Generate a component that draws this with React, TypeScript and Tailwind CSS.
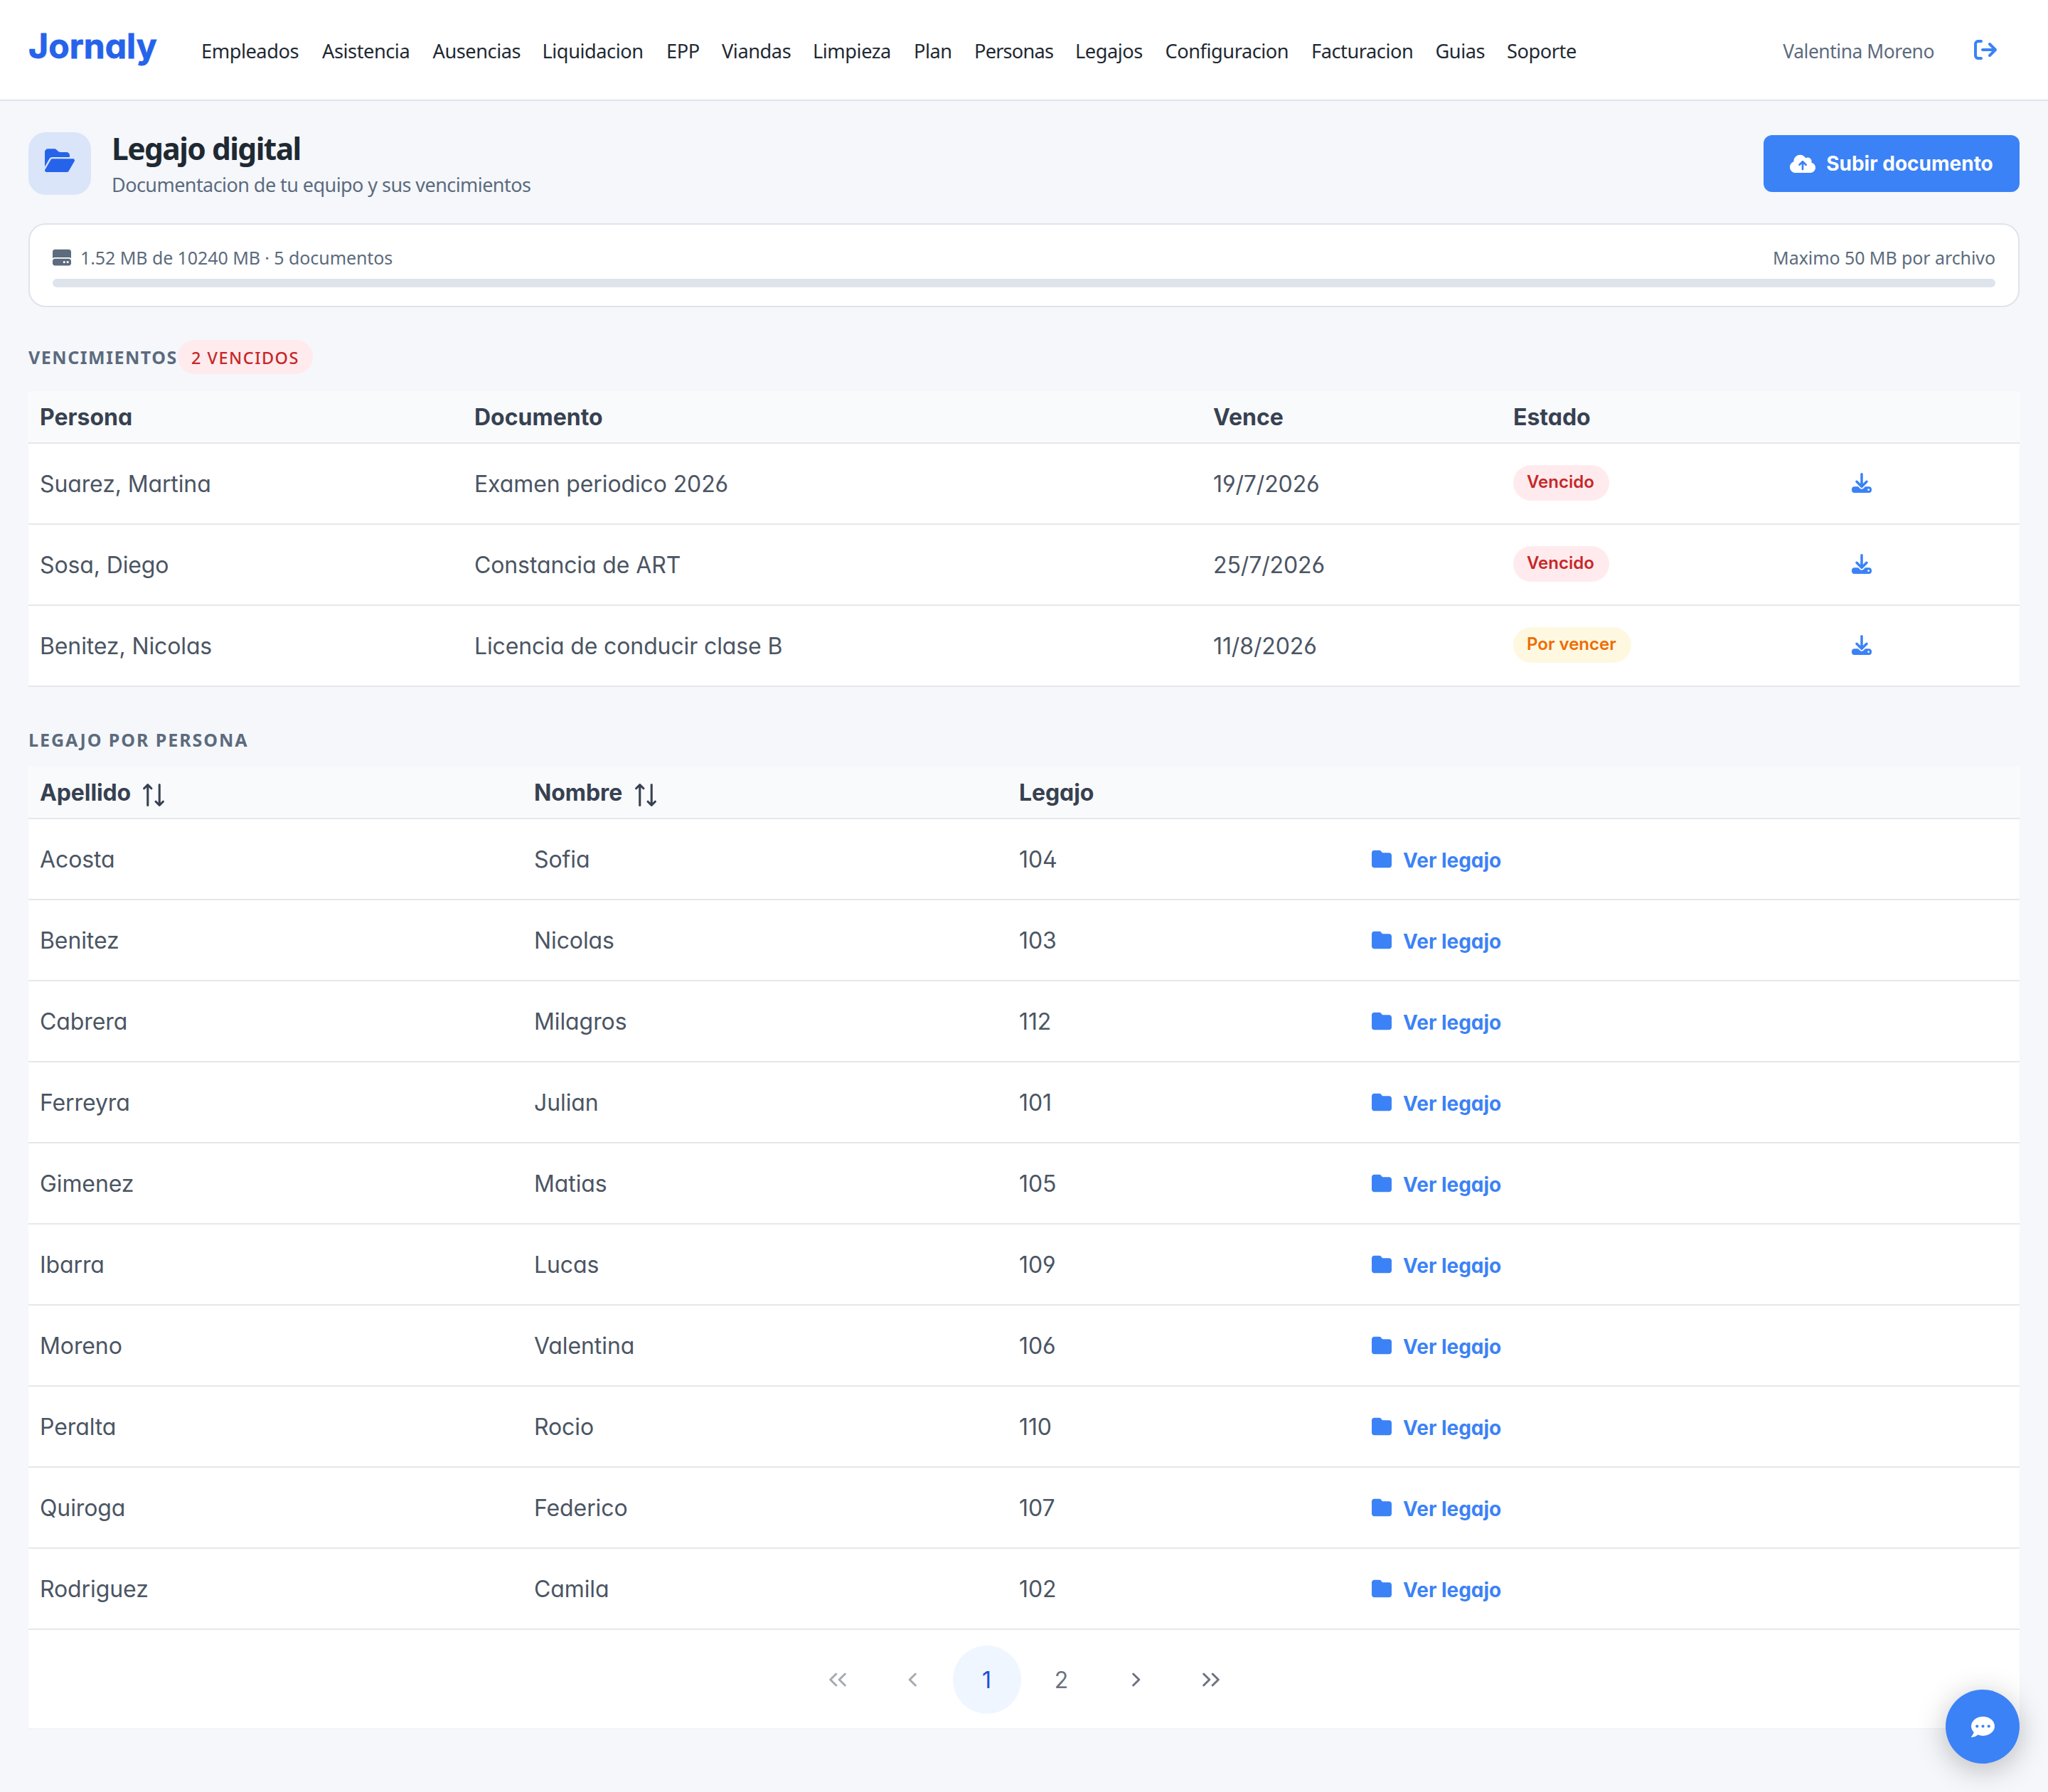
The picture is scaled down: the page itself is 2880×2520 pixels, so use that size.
import type { ReactNode } from "react";
import {
  FaArrowRightFromBracket,
  FaCloudArrowUp,
  FaDownload,
  FaFolder,
  FaFolderOpen,
  FaHardDrive,
} from "react-icons/fa6";
import { FaCommentDots } from "react-icons/fa";

const NAV: [string, string][] = [
  ["Empleados", "w-[138px]"],
  ["Asistencia", "w-[123.5px]"],
  ["Ausencias", "w-[122px]"],
  ["Liquidacion", "w-[142.5px]"],
  ["EPP", "w-[46px]"],
  ["Viandas", "w-[96px]"],
  ["Limpieza", "w-[110px]"],
  ["Plan", "w-[53px]"],
  ["Personas", "w-[110px] tracking-[-0.8px]"],
  ["Legajos", "w-[94.5px]"],
  ["Configuracion", "w-[173.5px]"],
  ["Facturacion", "w-[142.5px]"],
  ["Guias", "w-[68.5px]"],
  ["Soporte", "w-[100px]"],
];

type Status = "Vencido" | "Por vencer";

const DUE: { person: string; doc: string; date: string; status: Status }[] = [
  { person: "Suarez, Martina", doc: "Examen periodico 2026", date: "19/7/2026", status: "Vencido" },
  { person: "Sosa, Diego", doc: "Constancia de ART", date: "25/7/2026", status: "Vencido" },
  { person: "Benitez, Nicolas", doc: "Licencia de conducir clase B", date: "11/8/2026", status: "Por vencer" },
];

const PEOPLE: [string, string, string][] = [
  ["Acosta", "Sofia", "104"],
  ["Benitez", "Nicolas", "103"],
  ["Cabrera", "Milagros", "112"],
  ["Ferreyra", "Julian", "101"],
  ["Gimenez", "Matias", "105"],
  ["Ibarra", "Lucas", "109"],
  ["Moreno", "Valentina", "106"],
  ["Peralta", "Rocio", "110"],
  ["Quiroga", "Federico", "107"],
  ["Rodriguez", "Camila", "102"],
];

const DUE_COLS = "grid grid-cols-[611px_1039px_422px_476px_252px]";
const PEOPLE_COLS = "grid grid-cols-[695px_682px_496px_927px]";

function SortIcon() {
  return (
    <svg
      viewBox="0 0 14 14"
      className="mt-1.5 size-8 shrink-0"
      fill="none"
      stroke="currentColor"
      strokeWidth="1.35"
      strokeLinecap="round"
      strokeLinejoin="round"
    >
      <path d="M3.4 13.3V.75M1.15 2.95L3.4.7l2.25 2.25" />
      <path d="M10.6.7v12.55M8.35 11.05l2.25 2.25 2.25-2.25" />
    </svg>
  );
}

function Chevrons({ double, left }: { double?: boolean; left?: boolean }) {
  return (
    <svg
      viewBox={double ? "0 0 24 20" : "0 0 12 20"}
      className={`h-5 ${double ? "w-6" : "w-3"} ${left ? "-scale-x-100" : ""}`}
      fill="none"
      stroke="currentColor"
      strokeWidth="3"
      strokeLinecap="round"
      strokeLinejoin="round"
    >
      <path d="M1.7 2L9.8 10l-8.1 8" />
      {double && <path d="M14.2 2l8.1 8-8.1 8" />}
    </svg>
  );
}

function PageButton({ children, className = "" }: { children: ReactNode; className?: string }) {
  return (
    <button className={`flex size-24 items-center justify-center rounded-full text-[32px] ${className}`}>
      {children}
    </button>
  );
}

function StatusBadge({ status }: { status: Status }) {
  const tone = status === "Vencido" ? "bg-[#ffebee] text-[#c62828]" : "bg-[#fff8e1] text-[#ef6c00]";
  return (
    <span
      className={`-mt-0.5 flex h-[50px] items-center rounded-full pr-[21px] pl-[19px] pb-[3px] text-2xl font-semibold tracking-normal ${tone}`}
    >
      {status}
    </span>
  );
}

export default function App() {
  return (
    <div className="relative h-[2520px] w-[2880px] overflow-hidden bg-[#f5f7fb] font-['Noto_Sans',sans-serif] text-[#1f2933]">
      <header className="flex h-[142px] items-center border-b-2 border-[#dde4ec] bg-white pl-10">
        <div className="-mt-2.5 w-[243px] font-['Inter',sans-serif] text-[48px] leading-[56px] font-bold tracking-[0.1px] text-[#2563eb] [-webkit-text-stroke:0.8px_#2563eb] [font-feature-settings:'cv02','cv03','cv04','cv11']">
          Jornaly
        </div>
        <nav className="mt-[5px] flex gap-8 text-[27.2px] tracking-[-0.45px] whitespace-nowrap">
          {NAV.map(([item, size]) => (
            <a key={item} className={size}>
              {item}
            </a>
          ))}
        </nav>
        <div className="mr-[72px] ml-auto flex items-center">
          <span className="mt-[5px] mr-14 text-[26.4px] tracking-[-0.45px] whitespace-nowrap text-[#5c6b7d]">
            Valentina Moreno
          </span>
          <FaArrowRightFromBracket className="size-8 text-[#3b82f6]" />
        </div>
      </header>

      <main className="px-10 pt-11">
        <div className="flex h-[88px] items-center">
          <div className="flex size-[88px] items-center justify-center rounded-3xl bg-[#dbe5f9] pb-2 text-[#2563eb]">
            <FaFolderOpen className="h-[37.3px] w-[42px]" />
          </div>
          <div className="ml-7 flex flex-col pt-[3px] pl-px whitespace-nowrap">
            <h1 className="text-[42.5px] leading-[56px] font-bold tracking-[-1.55px]">Legajo digital</h1>
            <p className="text-[27px] leading-[46px] tracking-[-0.56px] text-[#5c6b7d]">
              Documentacion de tu equipo y sus vencimientos
            </p>
          </div>
          <button className="ml-auto flex h-20 w-[360px] items-center justify-center gap-[15px] rounded-xl bg-[#3b82f6] font-['Inter',sans-serif] text-[28px] font-bold whitespace-nowrap text-white">
            <FaCloudArrowUp className="h-[28.8px] w-9" />
            Subir documento
          </button>
        </div>

        <section className="mt-10 h-[118px] rounded-3xl border-2 border-[#dde4ec] bg-white px-8 pt-7">
          <div className="flex h-9 items-center justify-between text-[25px] tracking-[-0.08px] whitespace-nowrap text-[#5c6b7d]">
            <span className="flex items-center gap-[13px]">
              <FaHardDrive className="size-[26px]" />
              <span className="pt-0.5">1.52 MB de 10240 MB · 5 documentos</span>
            </span>
            <span className="pt-0.5">Maximo 50 MB por archivo</span>
          </div>
          <div className="mt-3 h-3 rounded-full bg-[#dde4ec]" />
        </section>

        <h2 className="mt-[46px] flex h-12 items-center text-[25px] font-bold tracking-[1.54px] text-[#5c6b7d]">
          <span className="pt-0.5">VENCIMIENTOS</span>
          <span className="flex h-12 w-[190px] items-center justify-center rounded-full bg-[#ffebee] pt-[3px] text-[23.5px] font-medium tracking-[1.5px] whitespace-nowrap text-[#c62828]">
            2 VENCIDOS
          </span>
        </h2>

        <div className="mt-6 font-['Inter',sans-serif] text-[32px] tracking-[-0.12px] text-[#4b5563] [font-feature-settings:'cv02','cv03','cv04','cv11']">
          <div className={`${DUE_COLS} h-[74px] items-center border-b-2 border-[#e5e7eb] bg-[#f9fafb] font-bold tracking-normal text-[#374151]`}>
            {["Persona", "Documento", "Vence", "Estado"].map((label) => (
              <div key={label} className="pt-0.5 pl-4">
                {label}
              </div>
            ))}
          </div>
          {DUE.map((row) => (
            <div key={row.person} className={`${DUE_COLS} h-[114px] items-center border-b-2 border-[#e5e7eb] bg-white`}>
              <div className="pt-0.5 pl-4">{row.person}</div>
              <div className="pt-0.5 pl-4">{row.doc}</div>
              <div className="pt-0.5 pl-4">{row.date}</div>
              <div className="flex pl-4">
                <StatusBadge status={row.status} />
              </div>
              <div className="pl-4">
                <FaDownload className="-mt-0.5 size-7 text-[#3b82f6]" />
              </div>
            </div>
          ))}
        </div>

        <h2 className="mt-[50px] flex h-12 items-center pt-0.5 text-[25px] font-bold tracking-[1.95px] text-[#5c6b7d]">
          LEGAJO POR PERSONA
        </h2>

        <div className="mt-3.5 font-['Inter',sans-serif] text-[32px] tracking-[-0.1px] text-[#4b5563] [font-feature-settings:'cv02','cv03','cv04','cv11']">
          <div className={`${PEOPLE_COLS} h-[74px] items-center border-b-2 border-[#e5e7eb] bg-[#f9fafb] font-bold text-[#374151]`}>
            <div className="flex items-center gap-4 pt-0.5 pl-4">
              Apellido
              <SortIcon />
            </div>
            <div className="flex items-center gap-[17px] pt-0.5 pl-4">
              Nombre
              <SortIcon />
            </div>
            <div className="pt-0.5 pl-4">Legajo</div>
          </div>
          {PEOPLE.map(([last, first, file]) => (
            <div key={last} className={`${PEOPLE_COLS} h-[114px] items-center border-b-2 border-[#e5e7eb] bg-white`}>
              <div className="pt-0.5 pl-4">{last}</div>
              <div className="pt-0.5 pl-4">{first}</div>
              <div className="pt-0.5 pl-4">{file}</div>
              <div className="flex items-center gap-4 pl-4 text-[28px] font-bold tracking-normal text-[#3b82f6]">
                <FaFolder className="size-7" />
                <span className="pt-1">Ver legajo</span>
              </div>
            </div>
          ))}
          <div className="flex h-[140px] items-center justify-center gap-[9px] border-b-2 border-[#f3f4f6] bg-white pt-0.5 text-[#6b7280]">
            <PageButton className="opacity-60">
              <Chevrons double left />
            </PageButton>
            <PageButton className="opacity-60">
              <Chevrons left />
            </PageButton>
            <PageButton className="bg-[#eff6ff] text-[#1d4ed8]">
              <span className="pt-0.5">1</span>
            </PageButton>
            <PageButton>
              <span className="pt-0.5">2</span>
            </PageButton>
            <PageButton>
              <Chevrons />
            </PageButton>
            <PageButton>
              <Chevrons double />
            </PageButton>
          </div>
        </div>
      </main>

      <button className="absolute right-10 bottom-10 flex size-[104px] items-center justify-center rounded-full bg-[#3b82f6] text-white shadow-[0_8px_40px_rgba(0,0,0,0.25)]">
        <FaCommentDots className="size-[33px]" />
      </button>
    </div>
  );
}
